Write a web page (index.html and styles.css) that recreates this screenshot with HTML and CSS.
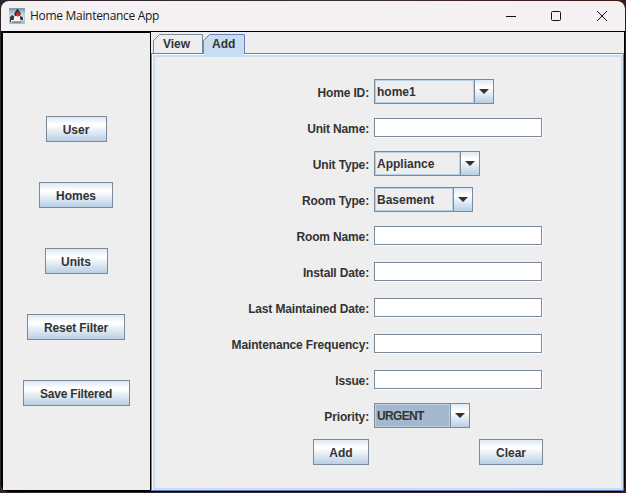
FILE: index.html
```html
<!DOCTYPE html>
<html lang="en">
<head>
<meta charset="utf-8">
<title>Home Maintenance App</title>
<link rel="stylesheet" href="styles.css">
</head>
<body>
<div class="window">
  <header class="titlebar">
    <svg class="app-icon" width="16" height="16" viewBox="0 0 16 16">
      <defs><linearGradient id="tile" x1="0" y1="0" x2="0" y2="1"><stop offset="0" stop-color="#7894a8"/><stop offset=".4" stop-color="#c8d4dc"/><stop offset="1" stop-color="#a9bac6"/></linearGradient></defs>
      <rect width="16" height="16" fill="url(#tile)"/>
      <path d="M1 8l4-2h6l4 3v3h-3l-1 2H2z" fill="#edf2f5"/>
      <path d="M5 6l3-5h1l3 5-1 2H6z" fill="#30363b"/>
      <path d="M1 9l2-2 2 1 1 3-2 1H2v2H1zM11 8l3 1v3h-2l-1-1z" fill="#343c43"/>
      <path d="M5 9h6l-1 4H5z" fill="#f4f7f8"/>
      <circle cx="9" cy="6.500" r="2" fill="#e52b2f"/>
      <path d="M3 14h9" stroke="#4a5a66"/>
    </svg>
    <span class="title">Home Maintenance App</span>
    <svg class="controls" width="106" height="12" viewBox="0 0 106 12" fill="none" stroke="#111">
      <path d="M0 6.500h10"/>
      <rect x="45.500" y="1.500" width="9" height="9" rx="1"/>
      <path d="M91 1l10 10M101 1L91 11"/>
    </svg>
  </header>
  <div class="content">
    <nav class="sidebar">
      <button class="btn w-user">User</button>
      <button class="btn w-homes">Homes</button>
      <button class="btn w-units">Units</button>
      <button class="btn w-reset">Reset Filter</button>
      <button class="btn w-save">Save Filtered</button>
    </nav>
    <main class="main">
      <div class="tabs">
        <div class="tab view"><svg class="tab-shape" width="50" height="19"><path d="M.5 20V6.500L6.500.500H49.500V20" fill="#eee" stroke="#7a8a99"/></svg><span>View</span></div>
        <div class="tab active"><svg class="tab-shape" width="42" height="22"><path d="M1 22V6.500L6.500.500H41V22z" fill="#c8ddf2"/><path d="M.5 20V6.500L6.500.500H41.500V20" fill="none" stroke="#6382bf"/></svg><span>Add</span></div>
      </div>
      <section class="pane">
        <div class="form">
          <label>Home ID:</label><div class="combo c-home"><span>home1</span><i><svg width="10" height="5"><path d="M0 0h10L5 5z"/></svg></i></div>
          <label>Unit Name:</label><div class="field"></div>
          <label>Unit Type:</label><div class="combo c-unit"><span>Appliance</span><i><svg width="10" height="5"><path d="M0 0h10L5 5z"/></svg></i></div>
          <label>Room Type:</label><div class="combo c-room"><span>Basement</span><i><svg width="10" height="5"><path d="M0 0h10L5 5z"/></svg></i></div>
          <label>Room Name:</label><div class="field"></div>
          <label>Install Date:</label><div class="field"></div>
          <label>Last Maintained Date:</label><div class="field"></div>
          <label>Maintenance Frequency:</label><div class="field"></div>
          <label>Issue:</label><div class="field"></div>
          <label>Priority:</label><div class="combo c-priority"><span>URGENT</span><i><svg width="10" height="5"><path d="M0 0h10L5 5z"/></svg></i></div>
        </div>
        <div class="actions">
          <button class="btn w-add">Add</button>
          <button class="btn w-clear">Clear</button>
        </div>
      </section>
    </main>
  </div>
</div>
</body>
</html>
```
FILE: styles.css
```css
* { box-sizing: border-box; }
body {
  margin: 0;
  height: 493px;
  padding: 1px;
  overflow: hidden;
  background: linear-gradient(90deg, #30242c, #3c2b33 60%, #401814);
  font: bold 12px/14px Arial, "Liberation Sans", sans-serif;
  color: #333;
}
.window {
  width: 624px;
  height: 491px;
  border-radius: 8px 8px 6px 6px;
  overflow: hidden;
  background: #000;
}
.titlebar {
  height: 30px;
  padding: 0 13px 0 8px;
  display: flex;
  align-items: center;
  background: #f5f1f2;
}
.title {
  margin-left: 5px;
  font: 12px/16px "Open Sans", "Noto Sans", sans-serif;
  letter-spacing: -0.3px;
  color: #191919;
}
.controls { margin-left: auto; margin-top: -1px; }
.content { display: flex; height: 461px; }
.sidebar {
  width: 150px;
  border: 2px solid #000;
  border-right-width: 1px;
  padding: 83px 1px 0 0;
  display: flex;
  flex-direction: column;
  align-items: center;
  gap: 40px;
  background: #eee;
}
.btn {
  height: 26px;
  padding: 1px 0 0;
  border: 1px solid #7a8a99;
  border-radius: 0;
  background: linear-gradient(#dde8f3 0, #fff 30%, #fff 35%, #b8cfe5 100%);
  font: inherit;
  color: #333;
}
.w-user { width: 61px; }
.w-homes { width: 74px; }
.w-units { width: 63px; }
.w-reset { width: 98px; letter-spacing: -0.1px; }
.w-save { width: 107px; letter-spacing: -0.2px; }
.w-add { width: 56px; }
.w-clear { width: 64px; }
.main {
  width: 473px;
  margin-top: 1px;
  height: 459px;
  display: flex;
  flex-direction: column;
  background: #eee;
}
.tabs { display: flex; height: 21px; padding: 2px 0 0 2px; }
.tab { position: relative; width: 50px; height: 19px; padding: 3px 0 0 10px; }
.tab.active { width: 42px; padding-left: 9px; z-index: 1; }
.tab-shape { position: absolute; left: 0; top: 0; }
.tab span { position: relative; }
.pane {
  flex: 1;
  border: 1px solid #6382bf;
  box-shadow: inset 1px 1px #fff, inset 0 0 0 2px #c8ddf2, inset 1px 1px 0 2px #c8ddf2;
  padding-top: 20px;
}
.form {
  display: grid;
  grid-template-columns: 217px 169px;
  grid-auto-rows: 36px;
  column-gap: 5px;
  align-items: center;
}
label {
  padding-top: 2px;
  text-align: right;
  white-space: nowrap;
  letter-spacing: -0.15px;
}
.combo {
  display: flex;
  height: 25px;
  margin-top: -1px;
  border: 1px solid #7a8a99;
}
.combo span {
  flex: 1;
  border: 1px solid #b8cfe5;
  padding: 4px 0 0 1px;
}
.combo i {
  width: 19px;
  border-left: 1px solid #7a8a99;
  display: flex;
  align-items: center;
  justify-content: center;
  background: linear-gradient(#dde8f3 0, #fff 30%, #fff 35%, #b8cfe5 100%);
}
.combo path { fill: #333; }
.c-home { width: 120px; }
.c-unit { width: 106px; }
.c-room { width: 99px; }
.c-priority { width: 96px; }
.c-priority span { background: #a3b8cc; letter-spacing: -0.65px; }
.field {
  width: 168px;
  height: 19px;
  margin-top: -1px;
  border: 1px solid #7a8a99;
  background: #fff;
  box-shadow: 1px 1px #fff;
}
.actions {
  display: flex;
  justify-content: space-between;
  width: 230px;
  margin: 5px 0 0 161px;
}
```
